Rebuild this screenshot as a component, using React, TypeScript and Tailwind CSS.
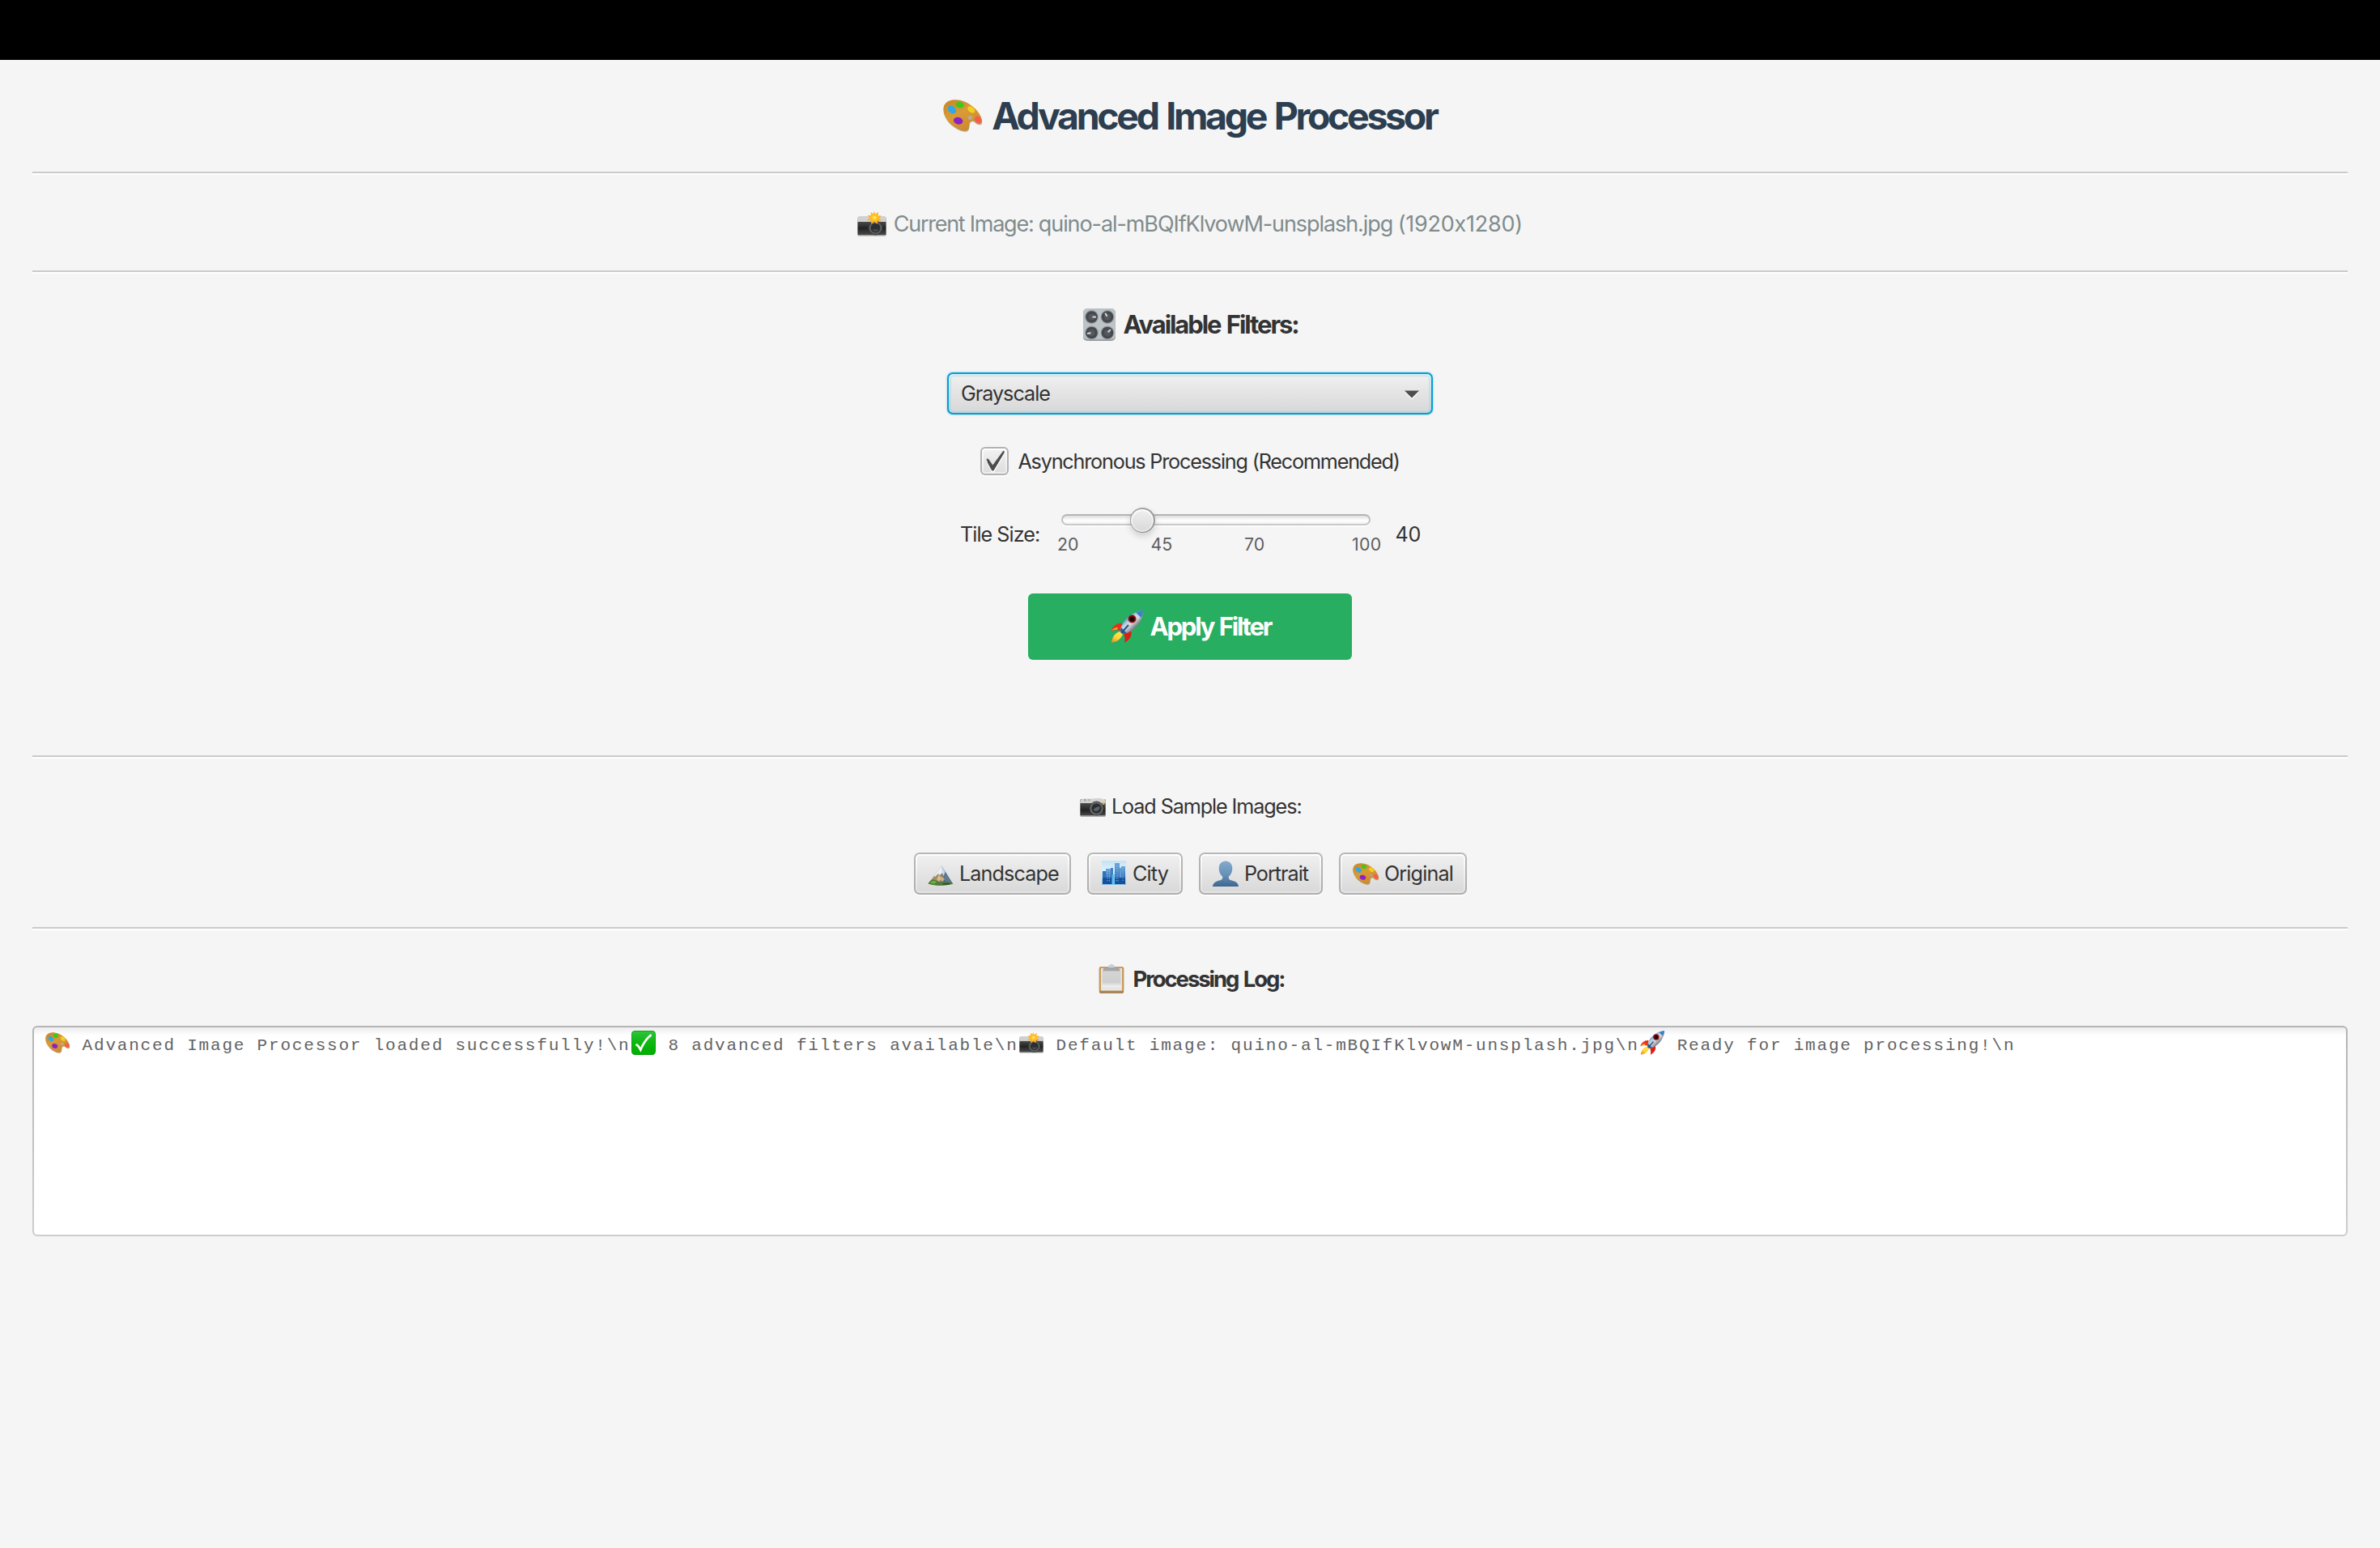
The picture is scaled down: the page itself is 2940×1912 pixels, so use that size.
import React from "react";

type IconProps = { className?: string };

function Palette({ className, id }: IconProps & { id: string }) {
  return (
    <svg viewBox="0.5 0.3 46.3 39.2" preserveAspectRatio="none" className={className}>
      <defs>
        <linearGradient id={id} x1="0" y1="0" x2="0.6" y2="1">
          <stop offset="0" stopColor="#c4862a" />
          <stop offset="0.5" stopColor="#da9b36" />
          <stop offset="1" stopColor="#cb8a30" />
        </linearGradient>
      </defs>
      <path
        d="M1 13C1 6 6 2 14 1.600C24 1 35 7 42 16C47 23 49 31 44 31C39 31 38 26 35 27C30 28.500 33 33 31 37C29 41 22 39 17 36C8 31 1 22 1 13Z"
        fill="#8f6a3a"
        opacity="0.55"
      />
      <path
        fillRule="evenodd"
        d="M1 12C1 5 6 1 14 .6C24 0 35 6 42 15C47 22 49 29.500 44 29.500C39.500 29.500 38 25 35 26C30 27.500 33 32 31 35.500C29 39.500 22 38 17 35C8 30 1 21 1 12ZM30 22a2.800 2.600 0 1 0 5.600 0a2.800 2.600 0 1 0-5.600 0Z"
        fill={`url(#${id})`}
      />
      <ellipse cx="20.500" cy="6.800" rx="5" ry="3.700" transform="rotate(15 20.500 6.800)" fill="#3fc71f" />
      <ellipse cx="11" cy="12.500" rx="5.600" ry="4" transform="rotate(42 11 12.500)" fill="#2fa8e6" />
      <ellipse cx="34" cy="12.500" rx="5" ry="3.200" transform="rotate(40 34 12.500)" fill="#f3cf1f" />
      <ellipse cx="42" cy="24.500" rx="4.200" ry="3.400" transform="rotate(50 42 24.500)" fill="#fb5a4c" />
      <ellipse cx="18.500" cy="26" rx="5.600" ry="4.200" transform="rotate(15 18.500 26)" fill="#8a22c4" />
    </svg>
  );
}

function FlashCamera({ className, id }: IconProps & { id: string }) {
  return (
    <svg viewBox="0 0 36 31" preserveAspectRatio="none" className={className}>
      <defs>
        <linearGradient id={`${id}b`} x1="0" y1="0" x2="0" y2="1">
          <stop offset="0" stopColor="#4a4a4a" />
          <stop offset="0.5" stopColor="#222" />
          <stop offset="1" stopColor="#4a4a4a" />
        </linearGradient>
        <radialGradient id={`${id}f`}>
          <stop offset="0" stopColor="#fff27a" />
          <stop offset="0.4" stopColor="#ffc21c" />
          <stop offset="1" stopColor="#f9a02c" />
        </radialGradient>
      </defs>
      <rect x="0.5" y="7" width="35" height="23.500" rx="1.500" fill="#9b9b9b" />
      <rect x="1" y="6" width="34" height="9" rx="1.500" fill="#d0d0ce" />
      <rect x="0.5" y="13" width="35" height="16" fill={`url(#${id}b)`} />
      <circle cx="22.500" cy="20.500" r="9" fill="#3e4040" />
      <circle cx="22.500" cy="20.500" r="7.600" fill="#646868" />
      <circle cx="22.500" cy="20.500" r="6" fill="#2c2f31" />
      <path d="M18.500 22.500a4.500 4.500 0 0 0 8 0Z" fill="#4d5255" />
      <path
        d="M20.500 0l1.800 3.600L26 1l-.4 4.300 4.400 .2-3.400 3 3.400 3-4.600 .2-.8 4-3.600-2.600-3.600 2.600-.6-4.200-4.300-.4 3.300-2.800-3-3.200 4.200-.2L16.600 1l3 2.400Z"
        fill={`url(#${id}f)`}
      />
    </svg>
  );
}

function Camera({ className }: IconProps) {
  return (
    <svg viewBox="0 0 32 23" className={className}>
      <defs>
        <linearGradient id="camBody" x1="0" y1="0" x2="0" y2="1">
          <stop offset="0" stopColor="#4c4c4c" />
          <stop offset="0.6" stopColor="#222" />
          <stop offset="1" stopColor="#474747" />
        </linearGradient>
      </defs>
      <rect x="0.3" y="1" width="31.400" height="21.800" rx="1.200" fill="#9a9a9a" />
      <path d="M1 2.500L4 .5h13l2-.5h7l2 1h2.500L31.500 7H.5Z" fill="#d3d3d1" />
      <rect x="5" y="1" width="3" height="2.500" fill="#a9a9a9" />
      <rect x="10" y="1" width="3" height="2.500" fill="#b5b5b5" />
      <rect x="0.5" y="6" width="31" height="15" fill="url(#camBody)" />
      <rect x="27" y="5.500" width="3.500" height="2.500" fill="#d6a03c" />
      <circle cx="20.500" cy="12.500" r="9" fill="#3b3d3e" />
      <circle cx="20.500" cy="12.500" r="8" fill="#6a6e70" />
      <circle cx="20.500" cy="12.500" r="6.200" fill="#2c2f31" />
      <path d="M16.500 14.500c2-3 5-4 8-4.500a4.800 4.800 0 0 1-8 4.500Z" fill="#5d6467" />
    </svg>
  );
}

function Knob({ x, y, a }: { x: number; y: number; a: number }) {
  return (
    <g transform={`translate(${x} ${y})`}>
      <circle r="8.400" fill="#979da2" />
      <circle r="7.300" fill="#45494d" />
      <circle r="4" fill="#55595e" />
      <path d="M1 0L5.500 0" stroke="#d4d9dc" strokeWidth="2" transform={`rotate(${a})`} />
    </g>
  );
}

function Knobs({ className }: IconProps) {
  return (
    <svg viewBox="0 0 40 40" className={className}>
      <rect x="0" y="0.5" width="40" height="39.500" rx="5" fill="#8d9498" />
      <rect x="0" y="0" width="40" height="38.500" rx="5" fill="#b9c0c4" />
      <rect x="1.500" y="1.500" width="37" height="35.500" rx="4" fill="#bdc4c8" />
      <Knob x={10.5} y={10.5} a={0} />
      <Knob x={30} y={10.5} a={-120} />
      <Knob x={10.5} y={30} a={-190} />
      <Knob x={30} y={30} a={-45} />
    </svg>
  );
}

function Rocket({ className, id }: IconProps & { id: string }) {
  return (
    <svg viewBox="0 0 40 40" preserveAspectRatio="none" className={className}>
      <defs>
        <linearGradient id={`${id}b`} x1="0.15" y1="0.15" x2="0.75" y2="0.8">
          <stop offset="0.15" stopColor="#2f6fb4" />
          <stop offset="0.42" stopColor="#b9d0e4" />
          <stop offset="0.6" stopColor="#d8dade" />
          <stop offset="1" stopColor="#4d4d58" />
        </linearGradient>
        <linearGradient id={`${id}f`} x1="0.8" y1="0" x2="0.1" y2="1">
          <stop offset="0" stopColor="#ffe94a" />
          <stop offset="0.55" stopColor="#ffd23a" />
          <stop offset="1" stopColor="#f08a1c" />
        </linearGradient>
      </defs>
      <path d="M12 26C6 27 2 32 1 39.500C8 39 13 35 15 29Z" fill={`url(#${id}f)`} />
      <path d="M14 16C8 15 2 20 .5 25.500C5 23.500 9 24 13 25Z" fill="#e6301a" />
      <path d="M.5 25.500C2 23 5 21 9 21L8 24C5 23.500 2 24.500 .5 25.500Z" fill="#ff9b2a" />
      <path d="M25 25C27 31 23 37 17 39.500C18.500 35 17 31 16 28Z" fill="#df1d12" />
      <path d="M40 0C30 1 20 7 15 16C13 20 11 24 12.500 27.500C16 30 21 28 25 25.500C34 20 40 10 40 0Z" fill={`url(#${id}b)`} />
      <path d="M40 0C37 .3 34 1.200 31 2.500L37.500 9C39.500 6 40 3 40 0Z" fill="#3f7fc2" />
      <path d="M13 21L20 28C16.500 29.500 13.500 29 12.500 27.500C11.700 25.500 12 23 13 21Z" fill="#2d5f9e" />
      <circle cx="26.500" cy="10.500" r="5" fill="#8f1010" />
      <circle cx="26.500" cy="10.500" r="3" fill="#160608" />
      <path d="M22 18L14 27" stroke="#2b4f86" strokeWidth="2" />
    </svg>
  );
}

function Mountain({ className }: IconProps) {
  return (
    <svg viewBox="0 0 32 25" className={className}>
      <defs>
        <linearGradient id="mtRock" x1="0" y1="0" x2="1" y2="0.4">
          <stop offset="0" stopColor="#c7b184" />
          <stop offset="0.5" stopColor="#9b8a72" />
          <stop offset="1" stopColor="#3d5672" />
        </linearGradient>
      </defs>
      <path d="M17 .5L31 22.500C22 25 9 25 1 22.500L9 11Z" fill="url(#mtRock)" />
      <path d="M17 .5L22 9L20 13L18 9L15 12L13 10L9 14L8 12.500Z" fill="#e9eff5" />
      <path d="M17 .5L24 11L30.500 22L22 20L20 12Z" fill="#5f7a96" />
      <path d="M17 .5L21.500 8L19.500 13L17.500 8Z" fill="#c9dcec" />
      <path d="M14 11L17 16L14 20L11 17Z" fill="#dcbd80" />
      <path d="M17 13L21 17L18 20L15.500 18Z" fill="#c9ae80" />
      <path d="M.5 22.500C3 18 6 16 9 18C13 20 15 22 20 21C25 19.500 28 20 31.500 22.800C22 25.500 9 25.500 .5 22.500Z" fill="#4a7f33" />
      <path d="M3 21.500C5 18.500 8 18 11 20.500L8 22.500Z" fill="#78ac44" />
      <path d="M18 22.500L26 21.500L28 23L19 24Z" fill="#274f2d" />
    </svg>
  );
}

function City({ className }: IconProps) {
  return (
    <svg viewBox="0 0 32 32" className={className}>
      <defs>
        <linearGradient id="citySky" x1="0" y1="0" x2="0" y2="1">
          <stop offset="0" stopColor="#c3e3f6" />
          <stop offset="0.4" stopColor="#dff1fb" />
          <stop offset="1" stopColor="#7fc4ec" />
        </linearGradient>
        <linearGradient id="cityA" x1="0" y1="0" x2="0" y2="1">
          <stop offset="0" stopColor="#6ba6dc" />
          <stop offset="1" stopColor="#1656a4" />
        </linearGradient>
      </defs>
      <rect x="1" y="1" width="30" height="30" fill="url(#citySky)" />
      <rect x="2" y="14" width="5" height="16" fill="#2f74b8" />
      <rect x="6" y="11" width="7" height="19" fill="url(#cityA)" />
      <rect x="12" y="10" width="3" height="20" fill="#3f83c6" />
      <rect x="17" y="4" width="6" height="26" fill="url(#cityA)" />
      <rect x="23" y="10" width="3" height="20" fill="#5d9fda" />
      <rect x="25" y="8" width="5" height="22" fill="url(#cityA)" />
      <rect x="2" y="22" width="11" height="8" fill="#164f9a" />
      <rect x="17" y="22" width="13" height="8" fill="#15509c" />
      <path d="M8 13v14M10.500 13v14M19 7v20M21 7v20M27 10v16" stroke="#a8d2f2" strokeWidth="0.7" strokeDasharray="1.500 1.500" />
      <rect x="14" y="18" width="2.500" height="12" fill="#4cc4f0" />
    </svg>
  );
}

function Person({ className }: IconProps) {
  return (
    <svg viewBox="0 0 32 32" className={className}>
      <defs>
        <linearGradient id="bust" x1="0" y1="0" x2="0" y2="1">
          <stop offset="0" stopColor="#82abcd" />
          <stop offset="0.55" stopColor="#6690b6" />
          <stop offset="1" stopColor="#3c6690" />
        </linearGradient>
      </defs>
      <path
        d="M16 .4C21 .4 24.300 4 24.300 9.500C24.300 14 22.500 17.500 20 19.500C19.400 21.500 20 23.300 22 24C27 25.500 31.500 26.500 32 32H0C.5 26.500 5 25.500 10 24C12 23.300 12.600 21.500 12 19.500C9.500 17.500 7.700 14 7.700 9.500C7.700 4 11 .4 16 .4Z"
        fill="url(#bust)"
      />
    </svg>
  );
}

function Clipboard({ className }: IconProps) {
  return (
    <svg viewBox="0 0 32 36" className={className}>
      <defs>
        <linearGradient id="sheet" x1="0" y1="0" x2="0" y2="1">
          <stop offset="0" stopColor="#d4d4d4" />
          <stop offset="0.7" stopColor="#cfcfcf" />
          <stop offset="1" stopColor="#f4f4f4" />
        </linearGradient>
      </defs>
      <rect x="0.8" y="3" width="30.400" height="33" rx="2.600" fill="#a98458" />
      <rect x="0.8" y="3" width="30.400" height="30" rx="2.600" fill="#c99b5c" />
      <rect x="3" y="5" width="26" height="27.500" fill="#e6e6e6" />
      <rect x="4.500" y="9" width="23" height="19" fill="url(#sheet)" />
      <path d="M5 8.500L6 5.500L12 3.600C12.500 1.300 14 .2 16 .2C18 .2 19.500 1.300 20 3.600L26 5.500L27 8.500Z" fill="#a3a5a8" />
      <path d="M12 4C12.500 1.500 14 .2 16 .2C18 .2 19.500 1.500 20 4Z" fill="#c6d2dc" />
    </svg>
  );
}

function GreenCheck({ className }: IconProps) {
  return (
    <svg viewBox="0 0 30 30" className={className}>
      <defs>
        <linearGradient id="chk" x1="0" y1="0" x2="0" y2="1">
          <stop offset="0" stopColor="#2fc43a" />
          <stop offset="0.45" stopColor="#10b812" />
          <stop offset="1" stopColor="#00ad00" />
        </linearGradient>
      </defs>
      <rect width="30" height="30" rx="4.500" fill="#089a10" />
      <rect x="0.8" y="0.8" width="28.400" height="28.400" rx="4" fill="url(#chk)" />
      <path d="M5.500 17C8 18 9.800 20.500 11.300 23.500C14.500 16 19 9.500 24.500 5" fill="none" stroke="#fff" strokeWidth="2.800" />
    </svg>
  );
}

function Separator({ className = "" }: IconProps) {
  return <div className={`mx-10 h-1 shrink-0 border-t-2 border-[#cacaca] bg-white ${className}`} />;
}

function SampleButton({ width, spacing, label, children }: { width: string; spacing: string; label: string; children: React.ReactNode }) {
  return (
    <button
      className={`h-[52px] rounded-[7px] bg-linear-to-b from-[#b7b7b7] to-[#afafaf] p-[2px] shadow-[0_2px_0_0_#fcfcfc] ${width}`}
    >
      <span className="flex size-full rounded-[5px] bg-linear-to-b from-white to-[#e3e3e3] p-[2px]">
        <span className="flex size-full items-center gap-[7.4px] rounded-[3px] bg-linear-to-b from-[#efefef] to-[#d9d9d9] pl-[13px]">
          {children}
          <span className={`pt-[2px] leading-none whitespace-nowrap ${spacing}`}>{label}</span>
        </span>
      </span>
    </button>
  );
}

function Slider() {
  return (
    <div className="relative h-[66px] w-[400px] text-[21.3px] leading-none text-[#5e5e5e]">
      <div className="absolute top-[8px] left-[6px] h-[14px] w-[382px] rounded-full bg-linear-to-b from-[#b3b3b3] to-[#cccccc] p-[2px] shadow-[0_2px_0_0_#fbfbfb]">
        <div className="size-full rounded-full bg-linear-to-b from-[#dedede] via-white via-60% to-[#f0f0f0]" />
      </div>
      <div className="absolute top-0 left-[91px] size-[31px] rounded-full bg-linear-to-b from-[#a3a3a3] to-[#8d8d8d] p-[1.5px] shadow-[0_4px_8px_0_rgba(0,0,0,0.16)]">
        <div className="size-full rounded-full bg-linear-to-b from-white to-[#e4e4e4] p-[2px]">
          <div className="size-full rounded-full bg-linear-to-b from-[#eeeeee] to-[#dadada]" />
        </div>
      </div>
      <span className="absolute top-[35px] left-[1.5px]">20</span>
      <span className="absolute top-[35px] left-[117px]">45</span>
      <span className="absolute top-[35px] left-[232.6px]">70</span>
      <span className="absolute top-[35px] left-[365.5px] tracking-[0.3px]">100</span>
    </div>
  );
}

export default function App() {
  return (
    <div className="flex h-[1912px] w-[2940px] flex-col overflow-hidden bg-[#f5f5f5] font-['Inter',sans-serif] text-[25.2px] leading-none text-[#333333] [font-feature-settings:'calt'_0]">
      <div className="h-[74px] shrink-0 bg-black" />

      <header className="flex h-[138px] shrink-0 items-center justify-center gap-[12.3px]">
        <Palette id="palTitle" className="h-[40px] w-[48px]" />
        <h1 className="w-[549.7px] text-[46.5px] leading-none font-bold tracking-[-3.36px] whitespace-nowrap text-[#2c3e50] [word-spacing:3px]">
          Advanced Image Processor
        </h1>
      </header>
      <Separator />

      <div className="flex h-[118px] shrink-0 items-center justify-center gap-[8.7px] pt-[2px]">
        <FlashCamera id="camInfo" className="h-[31px] w-[36px]" />
        <span className="w-[777.3px] text-[27px] leading-none whitespace-nowrap text-[#7f8c8d]">
          <span className="tracking-[-1.25px]">Current Image: </span>
          <span className="tracking-[-1.08px]">quino-al-mBQIfKlvowM-unsplash.jpg </span>
          <span className="tracking-[-0.25px]">(1920x1280)</span>
        </span>
      </div>
      <Separator />

      <section className="flex shrink-0 flex-col items-center">
        <div className="flex h-[122px] items-center gap-[9.5px] pt-[3px]">
          <Knobs className="size-[40px]" />
          <h2 className="w-[214.5px] text-[31px] leading-none font-bold tracking-[-2.06px] whitespace-nowrap [word-spacing:2px]">
            Available Filters:
          </h2>
        </div>

        <div className="h-[52px] w-[600px] rounded-[7px] bg-[#039ed3] p-[2px] shadow-[0_0_0_1.5px_#cfe7ef]">
          <div className="size-full rounded-[5px] bg-linear-to-b from-[#dcf0f6] to-[#bdd0d8] p-[2px]">
            <div className="flex size-full items-center justify-between rounded-[4px] border border-[#c3dde5] bg-linear-to-b from-[#efefef] to-[#d9d9d9] pr-[12px] pl-[12px]">
              <span className="pt-[2px] leading-none tracking-[-1.02px]">Grayscale</span>
              <svg viewBox="0 0 18 12" className="mt-[3px] h-[12px] w-[18px]">
                <path d="M0 2.500H18L9 12Z" fill="#f4f4f4" />
                <path d="M0 .5H18L9 9.500Z" fill="#4d4d4d" />
              </svg>
            </div>
          </div>
        </div>

        <div className="mt-[40px] flex h-[35px] items-center gap-[11.4px]">
          <div className="size-[35px] rounded-[6px] bg-[#b3b3b3] p-[2px] shadow-[0_2px_0_0_#fcfcfc]">
            <div className="size-full rounded-[4px] bg-linear-to-b from-white to-[#ececec] p-[2px]">
              <div className="size-full rounded-[2px] bg-linear-to-b from-[#f1f1f1] to-[#dedede]">
                <svg viewBox="4 4 27 27" className="size-full overflow-visible">
                  <path d="M7.700 17.500C8.500 16.800 9.600 16.800 10.500 17.500L15.500 25L28 7H29.700L29.500 9.500L17 31.500L14 31.500Z" fill="#fff" />
                  <path d="M7.700 15C8.500 14.300 9.600 14.500 10.500 15.500L15.300 22.500L28 5.300L29.700 4.800L29.400 7.500L17 28.500C16 30 14.600 30 13.800 28.500C12 25 8 18.500 7.700 15Z" fill="#4d4d4d" />
                </svg>
              </div>
            </div>
          </div>
          <span className="w-[471.6px] pt-[2px] tracking-[-1.19px] whitespace-nowrap">Asynchronous Processing (Recommended)</span>
        </div>

        <div className="mt-[40px] flex h-[66px] items-center gap-5">
          <span className="w-[99px] pt-[2px] pl-[0.5px] tracking-[-0.98px] whitespace-nowrap">Tile Size:</span>
          <Slider />
          <span className="-ml-px w-[31px] pt-[2px] tracking-[-0.3px]">40</span>
        </div>

        <button className="mt-[40px] flex h-[82px] w-[400px] items-center justify-center gap-[8.5px] rounded-[6px] bg-[#27ae60] text-[31px] leading-none font-bold text-white">
          <Rocket id="rkBtn" className="size-[40px]" />
          <span className="w-[147.5px] pb-[2px] text-left tracking-[-2.2px] whitespace-nowrap [word-spacing:1.5px]">Apply Filter</span>
        </button>
      </section>
      <Separator className="mt-[118px]" />

      <section className="flex shrink-0 flex-col items-center">
        <div className="flex h-[116px] items-center gap-[6.8px] pt-[2px]">
          <Camera className="mt-[2px] h-[23px] w-[32px]" />
          <span className="w-[233px] pt-[2px] tracking-[-1.1px] whitespace-nowrap">Load Sample Images:</span>
        </div>
        <div className="flex gap-5">
          <SampleButton width="w-[194px]" spacing="tracking-[-0.87px]" label="Landscape">
            <Mountain className="mt-[5px] h-[25px] w-[32px]" />
          </SampleButton>
          <SampleButton width="w-[118px]" spacing="tracking-[-0.8px]" label="City">
            <City className="-mt-[2px] h-[32px] w-[32px]" />
          </SampleButton>
          <SampleButton width="w-[153px]" spacing="tracking-[-1px]" label="Portrait">
            <Person className="-mt-[1px] h-[32px] w-[32px]" />
          </SampleButton>
          <SampleButton width="w-[158px]" spacing="tracking-[-0.85px]" label="Original">
            <Palette id="palBtn" className="h-[27px] w-[32px]" />
          </SampleButton>
        </div>
      </section>
      <Separator className="mt-[40px]" />

      <section className="flex shrink-0 flex-col items-center px-10">
        <div className="flex h-[118px] items-center gap-[10.8px] pt-[2px]">
          <Clipboard className="h-[36px] w-[32px]" />
          <h3 className="w-[183.7px] pt-[1.5px] text-[27.5px] leading-none font-bold tracking-[-2.08px] whitespace-nowrap [word-spacing:2px]">
            Processing Log:
          </h3>
        </div>
        <div className="h-[260px] w-full rounded-[6px] bg-linear-to-b from-[#b5b5b5] to-[#cdcdcd] p-[2px]">
          <div className="size-full rounded-[4px] bg-white bg-linear-to-b from-[#ededed] to-[#ffffff] to-[10px] pt-[4px] pl-[12.6px]">
            <div className="flex h-[30px] items-center font-['Liberation_Mono',monospace] text-[21px] leading-none tracking-[1.8px] whitespace-pre text-[#636363]">
              <span className="flex w-[32.6px] shrink-0 justify-center">
                <Palette id="palLog" className="h-[26px] w-[30px]" />
              </span>
              <span className="mt-[7.6px]">{" Advanced Image Processor loaded successfully!\\n"}</span>
              <span className="flex w-[32.6px] shrink-0 pl-[1px]">
                <GreenCheck className="size-[30px]" />
              </span>
              <span className="mt-[7.6px]">{" 8 advanced filters available\\n"}</span>
              <span className="flex w-[32.6px] shrink-0 pl-[1px]">
                <FlashCamera id="camLog" className="h-[26px] w-[30px]" />
              </span>
              <span className="mt-[7.6px]">{" Default image: quino-al-mBQIfKlvowM-unsplash.jpg\\n"}</span>
              <span className="flex w-[32.6px] shrink-0 pl-[1px]">
                <Rocket id="rkLog" className="size-[30px]" />
              </span>
              <span className="mt-[7.6px]">{" Ready for image processing!\\n"}</span>
            </div>
          </div>
        </div>
      </section>
    </div>
  );
}
